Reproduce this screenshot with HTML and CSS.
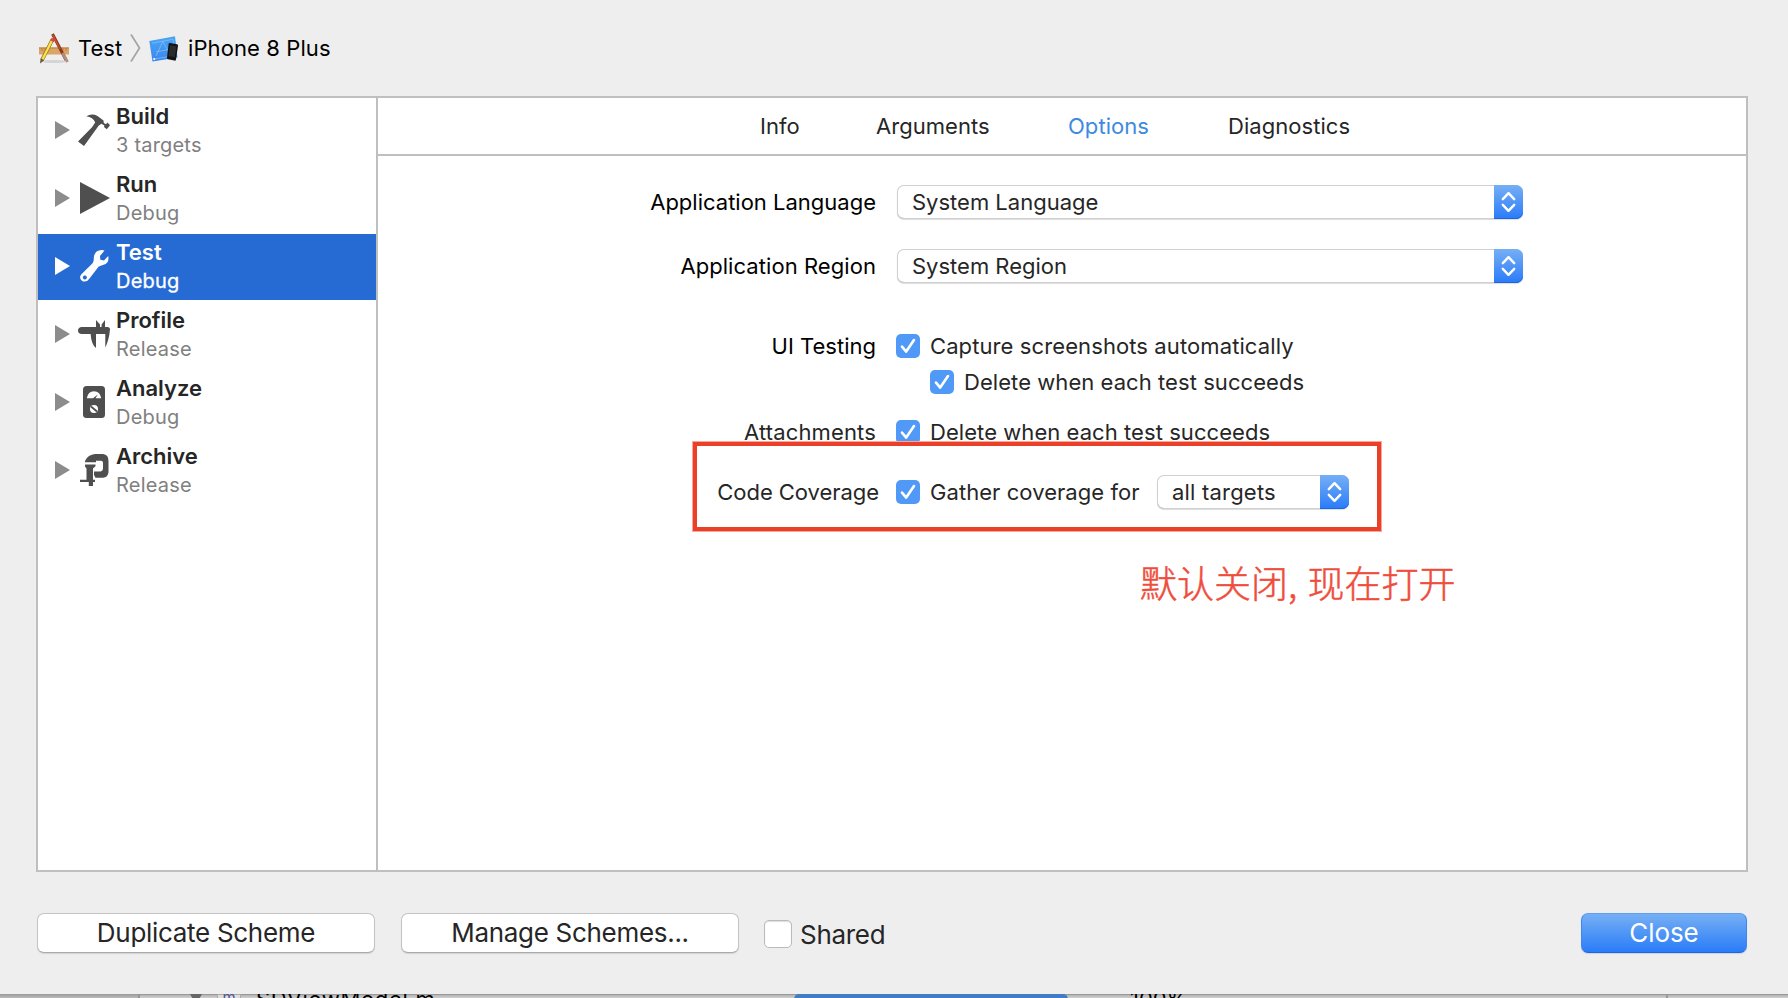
FILE: index.html
```html
<!DOCTYPE html>
<html lang="en">
<head>
<meta charset="utf-8">
<title>Scheme Editor</title>
<link rel="stylesheet" href="styles.css">
</head>
<body>
<svg class="defs" width="0" height="0">
  <symbol id="check" viewBox="0 0 24 24"><path d="M6 12.6 10.2 17.6 18 6" fill="none" stroke="#fff" stroke-width="2.6" stroke-linecap="round" stroke-linejoin="round"/></symbol>
  <symbol id="updown" viewBox="0 0 29 34"><path d="M8.8 14.2 14.5 8.2l5.7 6M8.8 19.8l5.7 6 5.7-6" fill="none" stroke="#fff" stroke-width="2.4" stroke-linecap="round" stroke-linejoin="round"/></symbol>
  <symbol id="disclosure" viewBox="0 0 15 18"><path d="M0 0 15 9 0 18z" fill="currentColor"/></symbol>
</svg>

<main class="sheet">
  <header class="crumbs">
    <svg class="app-icon" viewBox="0 0 32 32">
      <ellipse cx="16" cy="28.5" rx="12" ry="1.6" fill="#d4d4d4"/>
      <rect x="1" y="14.500" width="30" height="7" fill="#dba566"/>
      <path d="M1 15h30M4 15v3m3-3v3m3-3v3m12-3v3m3-3v3m3-3v3" stroke="#b98145" stroke-width="1"/>
      <path d="M14.500 1 28 27" stroke="#8d3a20" stroke-width="3"/>
      <path d="M14.800 2 22 16" stroke="#c5502d" stroke-width="1.4"/>
      <path d="M24.500 20 29.500 29" stroke="#b08e83" stroke-width="2.8"/>
      <path d="M14.500 6.500 4 27" stroke="#8d7521" stroke-width="3.800"/>
      <path d="M14 7.500 4.500 26.300" stroke="#ffe14a" stroke-width="2.3"/>
      <path d="M13 6l3.400 1.900" stroke="#d44a42" stroke-width="3"/>
      <path d="M2.600 25.500 2 30.500l4-3z" fill="#6b5641"/>
    </svg>
    <span class="crumb">Test</span>
    <svg class="sep" viewBox="0 0 11 28"><path d="M1 .5 9.500 14 1 27.500" fill="none" stroke="#a6a6a6" stroke-width="1.8"/></svg>
    <svg class="sim-icon" viewBox="0 0 30 28">
      <defs><linearGradient id="sim" x1="0" y1="0" x2="0" y2="1"><stop offset="0" stop-color="#4aa6f3"/><stop offset="1" stop-color="#3a86ee"/></linearGradient></defs>
      <path d="M.3 5 26 .2 28.500 21.500 3.500 25.500z" fill="url(#sim)"/>
      <path d="M3 7.200 24 3.300 26 19.500 5 23M14 5 7 20M13.500 5l8 14M7 16l15-3" fill="none" stroke="#7fbcf8" stroke-width=".8"/>
      <circle cx="5.200" cy="23" r="1.100" fill="#fff"/>
      <path d="M20.800 7 28 8.200q1.200.3 1 1.600l-2 13.600q-.3 1.400-1.500 1.200L19 23.300q-1.200-.3-1-1.500l1.600-13.700q.2-1.300 1.200-1.100z" fill="#121315"/>
      <path d="M21 9.300l6.500 1-1.800 11-6.200-1.200z" fill="#292b2e"/>
    </svg>
    <span class="crumb device">iPhone 8 Plus</span>
  </header>

  <section class="panel">
    <nav class="phases">
      <div class="phase">
        <svg class="tri"><use href="#disclosure"/></svg>
        <svg class="icon" viewBox="0 0 32 32"><path d="M8.300 2.200Q14-1 19.500 2L25.500 6.500 25.800 9 28 10.200 29.500 8.600 32 11.200 28.800 15.300 26 13 26.400 11.600 23.400 9.800 20.800 11.600 6 32 0 27.500 14 13.200 17.200 8.500Q15 3 8.300 2.200z" fill="currentColor"/></svg>
        <div><b>Build</b><span>3 targets</span></div>
      </div>
      <div class="phase">
        <svg class="tri"><use href="#disclosure"/></svg>
        <svg class="icon" viewBox="0 0 32 32"><path d="M2 0 32 16 2 32z" fill="currentColor"/></svg>
        <div><b>Run</b><span>Debug</span></div>
      </div>
      <div class="phase selected">
        <svg class="tri"><use href="#disclosure"/></svg>
        <svg class="icon" viewBox="0 0 32 32"><path fill-rule="evenodd" d="M26.500 0.500 22 6l.3 3.800 3.700.6L30.200 6Q31.600 13 25.500 14.800 22.500 15.600 20.500 16.800L11.500 28.500Q8.500 33 4.200 31 .5 28 3.200 24.400L14.800 13Q16 10.500 15.800 8 16.200 0 24 0zM6.800 25.400a2 2 0 1 0 .1 0z" fill="currentColor"/></svg>
        <div><b>Test</b><span>Debug</span></div>
      </div>
      <div class="phase">
        <svg class="tri"><use href="#disclosure"/></svg>
        <svg class="icon" viewBox="0 0 32 32"><path d="M3.200 9H18V2l4 4.500V9h1.600V6.500L27 2v7h2.500Q32 9 32 11.500 31 22 27.300 29.500V16H18v14Q13.500 27 12.600 16H3.200Q0 15.500 0 12.500T3.200 9z" fill="currentColor"/></svg>
        <div><b>Profile</b><span>Release</span></div>
      </div>
      <div class="phase">
        <svg class="tri"><use href="#disclosure"/></svg>
        <svg class="icon" viewBox="0 0 32 32"><rect x="5" y="0" width="22" height="32" rx="3.500" fill="currentColor"/><path d="M8.800 12.300Q10 5.500 16 5.300 22 5.500 23.300 12.300H17.500L19.800 8.500 15 12.300z" fill="#fff"/><circle cx="16" cy="23" r="4" fill="#fff"/><path d="M13 20.500l6 5" stroke="#4f4f4f" stroke-width="1.800"/></svg>
        <div><b>Analyze</b><span>Debug</span></div>
      </div>
      <div class="phase">
        <svg class="tri"><use href="#disclosure"/></svg>
        <svg class="icon" viewBox="0 0 32 32"><path d="M7 7Q10 .5 17 0H25Q30.500 .5 30.500 7V18Q30 23.500 25 23.800H17.500L16 21V17.500H22.500Q25 17 25 14V8.500Q24.800 6.800 23 6.800H18V8.200H7zM7 10.500H17.500V12.300L15 14.500V25.800H17V28H15V32H10.800V28H2V25.800H8.500V14.500L7 12.500z" fill="currentColor"/></svg>
        <div><b>Archive</b><span>Release</span></div>
      </div>
    </nav>

    <div class="detail">
      <div class="tabs"><span class="info">Info</span><span>Arguments</span><span class="active">Options</span><span>Diagnostics</span></div>
      <div class="form">
        <label>Application Language</label>
        <div class="popup wide"><span>System Language</span><i><svg><use href="#updown"/></svg></i></div>
        <label class="region">Application Region</label>
        <div class="popup wide"><span>System Region</span><i><svg><use href="#updown"/></svg></i></div>
        <label>UI Testing</label>
        <div class="opt"><svg class="cb"><use href="#check"/></svg><span class="capture">Capture screenshots automatically</span></div>
        <div class="opt nested"><svg class="cb"><use href="#check"/></svg><span>Delete when each test succeeds</span></div>
        <label class="ink attach">Attachments</label>
        <div class="opt"><svg class="cb"><use href="#check"/></svg><span>Delete when each test succeeds</span></div>
        <label class="ink coverage">Code Coverage</label>
        <div class="opt"><svg class="cb"><use href="#check"/></svg><span class="gather">Gather coverage for</span>
          <div class="popup small"><span>all targets</span><i><svg><use href="#updown"/></svg></i></div></div>
      </div>
    </div>
  </section>

  <footer class="actions">
    <button>Duplicate Scheme</button>
    <button>Manage Schemes...</button>
    <span class="shared"><i></i><span>Shared</span></span>
    <button class="primary">Close</button>
  </footer>
</main>

<div class="behind">
  <div class="gutter"></div>
  <div class="list"><svg class="down" viewBox="0 0 14 14"><path d="M0 0h14L7 13z" fill="#666"/></svg><span class="file">m</span><span class="name">SDViewModel.m</span><span class="bar"></span><span class="pct">100%</span></div>
  <div class="rest"></div>
</div>

<div class="mark-box"></div>
<div class="mark-text" lang="zh-CN">默认关闭, 现在打开</div>
</body>
</html>
```
FILE: styles.css
```css
* { box-sizing: border-box; }
body { margin: 0; width: 1788px; height: 998px; overflow: hidden; position: relative; background: #c9c9c9; color: #262626; font: 22px/26px Inter, "Noto Sans CJK SC", sans-serif; white-space: nowrap; }
svg { display: block; }
.defs { position: absolute; }
.sheet { height: 994px; background: #eee; padding: 0 40px 0 36px; display: flex; flex-direction: column; }

.crumbs { height: 96px; padding: 33px 0 0 2px; display: flex; align-items: flex-start; color: #000; }
.app-icon { width: 32px; height: 32px; }
.crumb { margin: 2px 0 0 8px; width: 52px; }
.crumb.device { margin-left: 9px; width: auto; letter-spacing: .1px; }
.sep { width: 11px; height: 28px; margin-top: 1px; }
.sim-icon { width: 30px; height: 28px; margin: 3px 0 0 8px; }

.panel { height: 776px; border: 2px solid #bfbfbf; background: #fff; display: flex; }
.phases { width: 340px; border-right: 2px solid #bfbfbf; display: flex; flex-direction: column; gap: 2px; }
.phase { height: 66px; padding-left: 17px; display: flex; color: #4f4f4f; }
.tri { width: 15px; height: 18px; margin: 23px 8px 0 0; color: #8c8c8c; }
.icon { width: 32px; height: 32px; margin: 16px 6px 0 0; }
.phase b, .phase div span { display: block; }
.phase b { margin-top: 5px; font-weight: 600; color: #262626; }
.phase div span { margin-top: 4px; font-size: 20px; line-height: 25px; letter-spacing: .2px; color: #808080; }
.phase.selected { background: #266bd3; color: #fff; }
.selected .tri, .selected b, .phase.selected div span { color: #fff; }
.phase.selected div span { -webkit-text-stroke: .3px #fff; }

.detail { flex: 1; }
.tabs { height: 58px; padding: 15px 0 0 382px; border-bottom: 2px solid #bfbfbf; display: grid; grid-template-columns: 116px 192px 160px auto; letter-spacing: .05px; }
.tabs .active { color: #3e8ade; }
.form { padding-top: 29px; display: grid; grid-template-columns: 498px auto; column-gap: 20px; grid-template-rows: 64px 80px 36px 50px 60px 34px; }
.form label { text-align: right; color: #000; height: 34px; line-height: 34px; grid-column: 1; }
.form label.region { letter-spacing: .06px; }
.form label.ink { color: #262626; }
.form label.attach { letter-spacing: .15px; }
.form label.coverage { margin-right: -3px; letter-spacing: -.05px; }
.popup { height: 34px; display: flex; justify-content: space-between; border-radius: 7px; background: #fff; box-shadow: inset 0 0 0 1px #d0d0d0, inset 0 -1px 0 #b4b4b4, 0 1px 1px #ddd; padding-left: 15px; line-height: 34px; }
.popup.wide { width: 626px; margin-left: 1px; }
.popup.small { width: 192px; letter-spacing: .2px; }
.popup i { width: 29px; border-radius: 0 7px 7px 0; background: linear-gradient(#76aff5, #2a7bf9); box-shadow: inset 0 -1px #1766ec; }
.popup i svg { width: 29px; height: 34px; }
.opt { display: flex; align-items: center; height: 34px; grid-column: 2; letter-spacing: .06px; }
.opt.nested { padding-left: 34px; }
.capture { letter-spacing: .1px; }
.cb { width: 24px; height: 24px; border-radius: 5px; background: #5199f7; margin-right: 10px; }
.gather { width: 227px; }

.actions { height: 122px; padding: 41px 1px 0 1px; display: flex; align-items: flex-start; font-size: 26px; line-height: 38px; letter-spacing: -.3px; }
.actions button { font: inherit; letter-spacing: inherit; color: #262626; width: 338px; height: 40px; margin-right: 26px; padding: 0; border: 1px solid #c4c4c4; border-bottom-color: #aaa; border-radius: 7px; background: #fff; box-shadow: 0 1px 1px #d2d2d2; }
.actions .primary { width: 166px; margin: 0 0 0 auto; letter-spacing: -.1px; color: #fff; border-color: #5f9ff3 #3d87f4 #1b65ed; background: linear-gradient(#76aff4, #2a7cf9); }
.shared { display: flex; padding-top: 3px; gap: 8px; margin-left: -1px; }
.shared i { width: 28px; height: 28px; margin-top: 4px; border: 1px solid #bababa; border-radius: 5px; background: #fff; box-shadow: inset 0 1px 1px #ddd; }

.behind { height: 4px; overflow: hidden; display: flex; box-shadow: inset 0 1px #999; background: linear-gradient(#aaa, #d0d0d0); color: #000; }
.gutter { width: 140px; border-right: 2px solid #979797; background: linear-gradient(#999, #bbb); }
.list { width: 1528px; border-right: 2px solid #999; display: flex; align-items: flex-start; }
.down { width: 14px; height: 14px; margin: -2px 14px 0 49px; flex: none; }
.file { width: 24px; height: 24px; border: 1px solid #aaa; background: #ddd; color: #555592; font-size: 15px; line-height: 6px; text-align: center; margin-right: 15px; }
.name { width: 538px; margin-top: -8px; letter-spacing: .7px; }
.bar { width: 274px; height: 16px; border-radius: 5px; background: #407dc4; margin-right: 62px; }
.pct { margin-top: -8px; }

.mark-box { position: absolute; left: 692px; top: 441px; width: 690px; height: 91px; border: 5px solid #eb4027; outline: 1px solid #f6a89c; outline-offset: -1px; }
.mark-text { position: absolute; left: 1140px; top: 555px; font: 300 37px/54px "Noto Sans CJK SC", sans-serif; word-spacing: 2px; color: #ef4d3c; -webkit-text-stroke: .5px #ef4d3c; }
```
